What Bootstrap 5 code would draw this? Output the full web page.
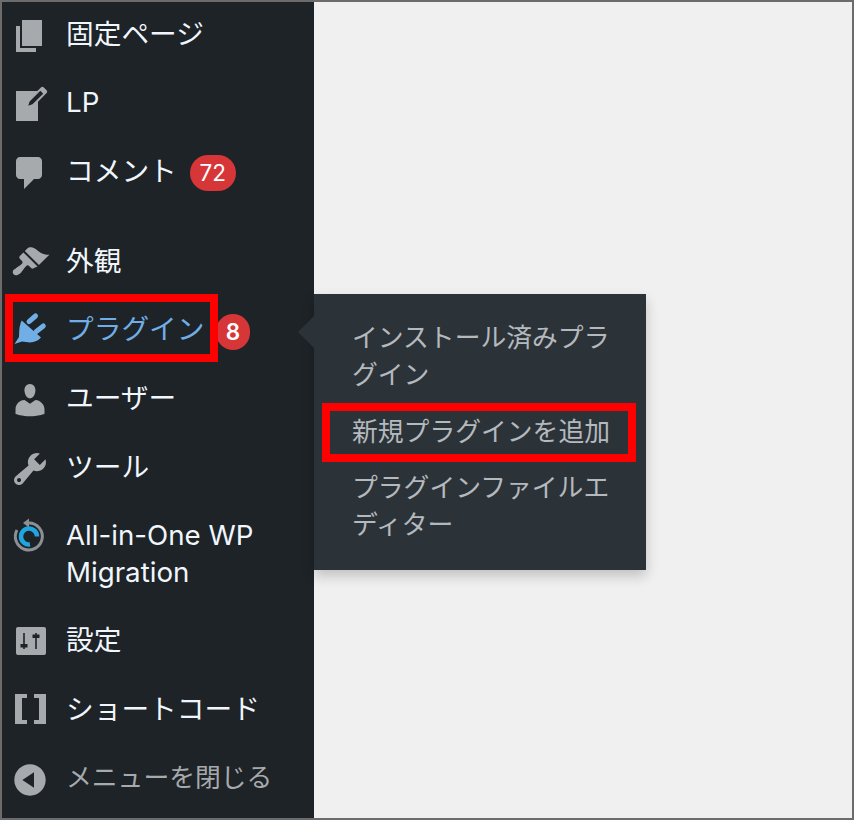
<!DOCTYPE html>
<html lang="ja">
<head>
<meta charset="utf-8">
<title>WordPress menu</title>
<link href="https://cdn.jsdelivr.net/npm/bootstrap@5.3.0/dist/css/bootstrap.min.css" rel="stylesheet">
<style>
html,body{margin:0;height:100%;background:#f0f0f1}
.wp-frame{width:854px;height:820px;border:2px solid #6c6c6c;background:#f0f0f1;position:relative;overflow:hidden;font-family:Inter,"Noto Sans CJK JP",sans-serif}
.wp-side{width:312px;height:816px;background:#1d2327}
.wp-row{height:68.7px;flex:none;padding-left:8px;color:#f0f6fc;font-size:27.7px;line-height:37px}
.wp-row svg{width:40px;height:40px;flex:none;fill:#a7aaad;margin-right:16px;position:relative;top:2px}
.wp-first{margin-top:-2.35px}
.wp-gap{margin-top:21px}
.wp-tall{height:104.7px}
.wp-tall svg{align-self:flex-start;margin-top:11px}
.wp-active{color:#72aee6}
.wp-active svg{fill:#72aee6}
.wp-muted{color:#a7aaad;font-size:25.8px}
.wp-count{background:#d63638;color:#fff;font-size:22.5px;height:36px;border-radius:18px;line-height:36px;margin-top:4px}
.wp-count-a{width:46px;margin-left:13px}
.wp-count-b{width:34px;margin-left:11.5px;font-weight:600}
.wp-fly{position:absolute;left:312px;top:292px;width:332px;height:276px;background:#2c3338;box-shadow:0 6px 12px rgba(0,0,0,.2);padding:25px 20px 0 38px;color:#b4b9be;font-size:25.8px;line-height:37px}
.wp-fly::before{content:"";position:absolute;left:-16px;top:22px;border:16px solid transparent;border-left-width:0;border-right-color:#2c3338}
.wp-subitem{margin-bottom:19.5px}
.wp-redbox{position:absolute;border:8px solid #f00;pointer-events:none}
.wp-rb1{left:3px;top:292px;width:213px;height:68px}
.wp-rb2{left:320px;top:401px;width:314px;height:59px}
</style>
</head>
<body>
<div class="wp-frame">
  <nav class="wp-side d-flex flex-column">
    <div class="wp-row wp-first d-flex align-items-center"><svg viewBox="0 0 20 20"><path d="M6 15V2h10v13H6zm-1 1h8v2H3V5h2v11z"/></svg><span>固定ページ</span></div>
    <div class="wp-row d-flex align-items-center"><svg viewBox="0 0 20 20"><path d="M16.89 1.2l1.41 1.41c.39.39.39 1.02 0 1.41L14 8.33V18H3V3h10.67l1.8-1.8c.4-.39 1.03-.4 1.42 0zm-5.66 8.48l5.37-5.36-1.42-1.42-5.36 5.37-.71 2.12z"/></svg><span>LP</span></div>
    <div class="wp-row d-flex align-items-center"><svg viewBox="0 0 20 20"><path d="M5 2h9c1.1 0 2 .9 2 2v7c0 1.1-.9 2-2 2h-2l-5 5v-5H5c-1.1 0-2-.9-2-2V4c0-1.1.9-2 2-2z"/></svg><span>コメント</span><span class="wp-count wp-count-a text-center">72</span></div>
    <div class="wp-row wp-gap d-flex align-items-center"><svg viewBox="0 0 20 20"><path d="M14.48 11.06L7.41 3.99l1.5-1.5c.5-.56 2.3-.47 3.51.32 1.21.8 1.43 1.28 2.91 2.1 1.18.64 2.45 1.26 4.45.85zm-.71.71L6.7 4.7 4.93 6.47c-.39.39-.39 1.02 0 1.41l1.06 1.06c.39.39.39 1.03 0 1.42-.6.6-1.43 1.11-2.21 1.69-.35.26-.7.53-1.01.84C1.43 13.23.91 14.76 1.8 15.66s2.43.37 3.77-.97c.31-.31.58-.66.84-1.01.58-.78 1.09-1.61 1.69-2.21.39-.39 1.03-.39 1.42 0l1.06 1.06c.39.39 1.02.39 1.41 0z"/></svg><span>外観</span></div>
    <div class="wp-row wp-active d-flex align-items-center"><svg viewBox="0 0 40 40"><path d="M11.700 8.500L31 25.500Q27 30 20 30.500L12 29.500 4.500 32 9 25Q9 13 11.700 8.500z"/><path d="M19 9.700L25.500 4M26 19.700L33.300 14" stroke="#72aee6" stroke-width="5" stroke-linecap="round"/></svg><span>プラグイン</span><span class="wp-count wp-count-b text-center">8</span></div>
    <div class="wp-row d-flex align-items-center"><svg viewBox="0 0 20 20"><path d="M10 9.25c-2.27 0-2.73-3.44-2.73-3.44C7 4.02 7.82 2 9.97 2c2.16 0 2.98 2.02 2.71 3.81 0 0-.41 3.44-2.68 3.44zm0 2.57L12.72 10c2.39 0 4.52 2.33 4.52 4.53v2.49s-3.65 1.13-7.24 1.13c-3.65 0-7.24-1.13-7.24-1.13v-2.49c0-2.25 1.94-4.48 4.47-4.48z"/></svg><span>ユーザー</span></div>
    <div class="wp-row d-flex align-items-center"><svg viewBox="0 0 20 20"><path d="M16.68 9.77c-1.34 1.34-3.3 1.67-4.95.99l-5.41 6.52c-.99.99-2.59.99-3.58 0s-.99-2.59 0-3.57l6.52-5.42c-.68-1.65-.35-3.61.99-4.95 1.28-1.28 3.12-1.62 4.72-1.06l-2.89 2.89 2.82 2.82 2.86-2.87c.53 1.58.18 3.39-1.08 4.65zM3.81 16.21c.4.39 1.04.39 1.43 0 .4-.4.4-1.04 0-1.43-.39-.4-1.03-.4-1.43 0-.39.39-.39 1.03 0 1.43z"/></svg><span>ツール</span></div>
    <div class="wp-row wp-tall d-flex align-items-center"><svg viewBox="0 0 40 40"><path d="M19 9A13.5 13.5 0 1 1 7 16" fill="none" stroke="#8c8f94" stroke-width="3"/><path d="M19 4.5v9L13 9z" fill="#8c8f94"/><path d="M20 30.5A8 8 0 1 1 27 22.5" fill="none" stroke="#1fa6e0" stroke-width="4.5"/></svg><span>All-in-One WP<br>Migration</span></div>
    <div class="wp-row d-flex align-items-center"><svg viewBox="0 0 40 40"><rect x="6" y="4" width="30" height="28" rx="2"/><path d="M14 10v16M26 10v16" stroke="#1d2327" stroke-width="1.6"/><path d="M10.5 21h7v3.500h-7zM22.500 11.500h7V15h-7z" fill="#1d2327"/></svg><span>設定</span></div>
    <div class="wp-row d-flex align-items-center"><svg viewBox="0 0 40 40"><path d="M5 3h12v4h-5v22h5v4H5zM24 3h12v30H24v-4h5V7h-5z"/></svg><span>ショートコード</span></div>
    <div class="wp-row wp-muted d-flex align-items-center"><svg viewBox="0 0 20 20"><path d="M10 2.160c4.330 0 7.840 3.510 7.840 7.840s-3.510 7.840-7.840 7.840S2.160 14.330 2.160 10 5.710 2.160 10 2.160zm2 11.720V6.120L6.180 9.970z"/></svg><span>メニューを閉じる</span></div>
  </nav>
  <div class="wp-fly">
    <div class="wp-subitem">インストール済みプラグイン</div>
    <div class="wp-subitem">新規プラグインを追加</div>
    <div class="wp-subitem">プラグインファイルエディター</div>
  </div>
  <div class="wp-redbox wp-rb1"></div>
  <div class="wp-redbox wp-rb2"></div>
</div>
<script src="https://cdn.jsdelivr.net/npm/bootstrap@5.3.0/dist/js/bootstrap.bundle.min.js"></script>
</body>
</html>
